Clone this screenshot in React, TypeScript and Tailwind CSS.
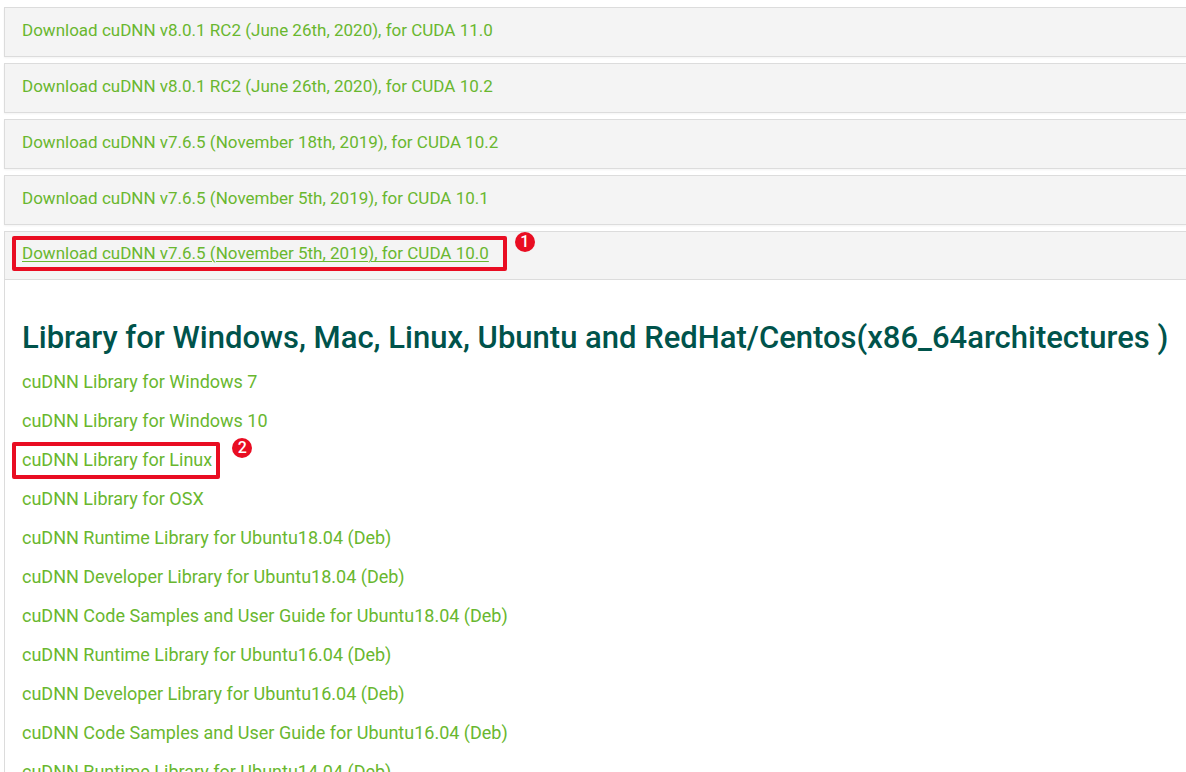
import React from "react";

const releases = [
  "Download cuDNN v8.0.1 RC2 (June 26th, 2020), for CUDA 11.0",
  "Download cuDNN v8.0.1 RC2 (June 26th, 2020), for CUDA 10.2",
  "Download cuDNN v7.6.5 (November 18th, 2019), for CUDA 10.2",
  "Download cuDNN v7.6.5 (November 5th, 2019), for CUDA 10.1",
];

const libraries = [
  "cuDNN Library for Windows 7",
  "cuDNN Library for Windows 10",
  "cuDNN Library for Linux",
  "cuDNN Library for OSX",
  "cuDNN Runtime Library for Ubuntu18.04 (Deb)",
  "cuDNN Developer Library for Ubuntu18.04 (Deb)",
  "cuDNN Code Samples and User Guide for Ubuntu18.04 (Deb)",
  "cuDNN Runtime Library for Ubuntu16.04 (Deb)",
  "cuDNN Developer Library for Ubuntu16.04 (Deb)",
  "cuDNN Code Samples and User Guide for Ubuntu16.04 (Deb)",
  "cuDNN Runtime Library for Ubuntu14.04 (Deb)",
];

// Red frame with a numbered badge, drawn over the link it surrounds.
function Callout({ step, frame, badge }: { step: number; frame: string; badge: string }) {
  return (
    <span className={`pointer-events-none absolute rounded-xs border-4 border-[#e90d22] ${frame}`}>
      <span
        className={`absolute -top-2 flex size-5 items-center justify-center rounded-full bg-[#e90d22] text-base leading-5 font-medium text-white ${badge}`}
      >
        {step}
      </span>
    </span>
  );
}

export default function App() {
  return (
    <main className="h-screen overflow-hidden bg-white pt-[7px] pl-1 font-[Roboto,sans-serif] leading-[27px] text-[#69b72f]">
      <div className="flex flex-col gap-1.5 text-[17px]">
        {releases.map((title) => (
          <div
            key={title}
            className="h-[50px] border border-r-0 border-[#dcdcdc] bg-[#f4f4f4] px-[17px] pt-[9px] shadow-xs"
          >
            <a href="#" className="inline-block whitespace-nowrap">{title}</a>
          </div>
        ))}
        <section className="border border-r-0 border-[#dcdcdc]">
          <div className="h-12 border-b border-[#dcdcdc] bg-[#f4f4f4] px-[17px] pt-2">
            <a href="#" className="relative inline-block whitespace-nowrap">
              <span className="underline decoration-1 underline-offset-2">
                Download cuDNN v7.6.5 (November 5th, 2019), for CUDA 10.0
              </span>
              <Callout step={1} frame="-top-1 -right-[18px] -bottom-1 -left-2.5" badge="-right-8" />
            </a>
          </div>
          <div className="px-[17px] pt-[38px] text-lg leading-[27px]">
            <h2 className="text-[31px] leading-10 font-medium whitespace-nowrap text-[#00534b]">
              Library for Windows, Mac, Linux, Ubuntu and RedHat/Centos(x86_64architectures )
            </h2>
            <ul className="flex flex-col gap-3 pt-2.5">
              {libraries.map((name) => (
                <li key={name} className="flex">
                  <a href="#" className="relative whitespace-nowrap">
                    {name}
                    {name === "cuDNN Library for Linux" && (
                      <Callout step={2} frame="-top-1 -right-2 -bottom-1.5 -left-2.5" badge="-right-9" />
                    )}
                  </a>
                </li>
              ))}
            </ul>
          </div>
        </section>
      </div>
    </main>
  );
}
